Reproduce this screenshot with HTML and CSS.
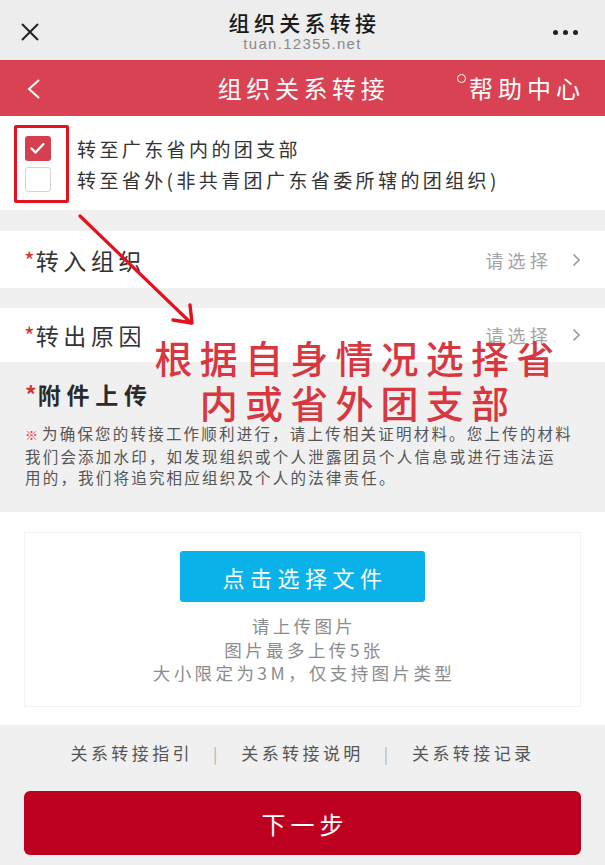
FILE: index.html
```html
<!DOCTYPE html>
<html lang="zh-CN">
<head>
<meta charset="utf-8">
<title>组织关系转接</title>
<link rel="stylesheet" href="styles.css">
</head>
<body>
<div class="topbar">
  <div class="tb-left">
    <svg width="20" height="20" viewBox="0 0 20 20"><path d="M2 2 L18 18 M18 2 L2 18" stroke="#222" stroke-width="2" fill="none"/></svg>
  </div>
  <div class="tb-center">
    <div class="tb-title">组织关系转接</div>
    <div class="tb-url">tuan.12355.net</div>
  </div>
  <div class="tb-right"><span class="dot"></span><span class="dot"></span><span class="dot"></span></div>
</div>

<div class="header">
  <div class="hd-left">
    <svg width="14" height="20" viewBox="0 0 14 20"><polyline points="12,1 2,10 12,19" stroke="#fff" stroke-width="2" fill="none"/></svg>
  </div>
  <div class="hd-title">组织关系转接</div>
  <div class="hd-right"><span class="ring"></span>帮助中心</div>
</div>

<div class="choices">
  <div class="choice">
    <span class="cb cb-on"><svg width="25" height="24" viewBox="0 0 25 24"><polyline points="6.5,12.5 10.5,16.5 18.5,8" stroke="#fff" stroke-width="2.4" fill="none" stroke-linecap="round" stroke-linejoin="round"/></svg></span>
    <span class="choice-text">转至广东省内的团支部</span>
  </div>
  <div class="choice">
    <span class="cb cb-off"></span>
    <span class="choice-text">转至省外(非共青团广东省委所辖的团组织)</span>
  </div>
</div>

<div class="row row-first">
  <div class="row-label"><span class="req">*</span>转入组织</div>
  <div class="row-value">请选择<svg class="chev" width="9" height="14" viewBox="0 0 9 14"><polyline points="1.5,1.5 7,7 1.5,12.5" stroke="#999" stroke-width="1.6" fill="none"/></svg></div>
</div>

<div class="row row-second">
  <div class="row-label"><span class="req">*</span>转出原因</div>
  <div class="row-value">请选择<svg class="chev" width="9" height="14" viewBox="0 0 9 14"><polyline points="1.5,1.5 7,7 1.5,12.5" stroke="#999" stroke-width="1.6" fill="none"/></svg></div>
</div>

<div class="upload-head">
  <div class="upload-title"><span class="req">*</span>附件上传</div>
  <p class="notice"><span class="ref">※</span>为确保您的转接工作顺利进行，请上传相关证明材料。您上传的材料<br>我们会添加水印，如发现组织或个人泄露团员个人信息或进行违法运<br>用的，我们将追究相应组织及个人的法律责任。</p>
</div>

<div class="upload">
  <div class="upload-box">
    <div class="pick-btn">点击选择文件</div>
    <div class="hints">
      <div>请上传图片</div>
      <div>图片最多上传5张</div>
      <div>大小限定为3M，仅支持图片类型</div>
    </div>
  </div>
</div>

<div class="links">
  <span class="link">关系转接指引</span>
  <span class="sep">|</span>
  <span class="link">关系转接说明</span>
  <span class="sep">|</span>
  <span class="link">关系转接记录</span>
</div>

<div class="next-btn">下一步</div>

<!-- annotation overlay -->
<div class="mark-box"></div>
<svg class="mark-arrow" width="140" height="130" viewBox="0 0 140 130">
  <line x1="10" y1="7" x2="121" y2="114" stroke="#e3121c" stroke-width="3.2" stroke-linecap="round"/>
  <polyline points="103,111 122,114 120,96" stroke="#e3121c" stroke-width="3.4" fill="none" stroke-linecap="round" stroke-linejoin="round"/>
</svg>
<div class="mark-text">根据自身情况选择省<br>内或省外团支部</div>
</body>
</html>
```

FILE: styles.css
```css
* { box-sizing: border-box; }

body {
  margin: 0;
  width: 605px;
  min-height: 865px;
  background: #f0f0f0;
  font-family: "Noto Sans CJK SC", "Noto Sans", sans-serif;
  color: #333;
  position: relative;
}

/* WeChat top bar */
.topbar {
  height: 60px;
  background: #ededed;
  display: grid;
  grid-template-columns: 80px 1fr 80px;
  align-items: center;
}
.tb-left { padding-left: 20px; padding-top: 4px; display: flex; }
.tb-center { text-align: center; padding-top: 2px; }
.tb-title {
  font-size: 21px;
  line-height: 26px;
  letter-spacing: 4.3px;
  padding-left: 4px;
  color: #1a1a1a;
  font-weight: 500;
}
.tb-url {
  font-family: "Liberation Sans", Arial, sans-serif;
  font-size: 15px;
  line-height: 18px;
  letter-spacing: 1.3px;
  color: #8a8a8a;
}
.tb-right {
  display: flex;
  justify-content: flex-end;
  gap: 5px;
  padding-right: 27px;
  padding-top: 4px;
}
.dot {
  width: 5px; height: 5px;
  border-radius: 50%;
  background: #222;
}

/* red app header */
.header {
  height: 56px;
  background: #d84252;
  color: #fff;
  display: grid;
  grid-template-columns: 120px 1fr 150px;
  align-items: center;
}
.hd-left { padding-left: 27px; display: flex; padding-top: 2px; }
.hd-title {
  text-align: center;
  font-size: 24px;
  letter-spacing: 4.6px;
  padding-left: 32px;
  line-height: 30px;
}
.hd-right {
  font-size: 24px;
  letter-spacing: 5px;
  line-height: 30px;
  text-align: right;
  padding-right: 20px;
  white-space: nowrap;
}
.ring {
  display: inline-block;
  width: 9px; height: 9px;
  border: 1.5px solid #fff;
  border-radius: 50%;
  vertical-align: top;
  margin-top: 1px;
  margin-right: 3px;
}

/* choices */
.choices {
  background: #fff;
  height: 94px;
  padding: 17px 0 0 25px;
}
.choice {
  height: 31px;
  display: flex;
  align-items: center;
}
.cb {
  width: 26px; height: 25px;
  border-radius: 3px;
  margin-right: 26px;
  flex: none;
  display: flex;
}
.cb-on { background: #d63f50; }
.cb-off { border: 1.5px solid #d4d4d4; background: #fff; }
.choice-text {
  font-size: 19px;
  letter-spacing: 3.4px;
  color: #333;
  white-space: nowrap;
}

/* rows */
.row {
  background: #fff;
  display: flex;
  align-items: center;
  justify-content: space-between;
  padding: 0 24px 0 24px;
}
.row-first { margin-top: 21px; height: 57px; }
.row-second { margin-top: 20px; height: 54px; }
.row-label {
  font-size: 23px;
  letter-spacing: 4.6px;
  color: #333;
}
.req { color: #d9312f; letter-spacing: 0; margin-right: 1px; }
.row-value {
  font-size: 18px;
  letter-spacing: 4.2px;
  color: #a4a4a4;
  display: flex;
  align-items: center;
}
.chev { margin-left: 20px; }

/* upload header */
.upload-head {
  height: 150px;
  padding: 17px 10px 0 25px;
}
.upload-title {
  font-size: 23px;
  font-weight: 700;
  letter-spacing: 5.8px;
  line-height: 30px;
  color: #2a2a2a;
}
.notice {
  margin: 14px 0 0;
  font-size: 15.5px;
  line-height: 21.5px;
  letter-spacing: 2.2px;
  color: #555;
  white-space: nowrap;
}
.ref {
  color: #e0474b;
  font-size: 13px;
  letter-spacing: 0;
  margin-right: 4px;
}

/* upload area */
.upload {
  background: #fff;
  height: 213px;
  padding: 20px 24px 0 24px;
}
.upload-box {
  border: 1px solid #f2f2f2;
  height: 175px;
  padding-top: 18px;
  display: flex;
  flex-direction: column;
  align-items: center;
}
.pick-btn {
  width: 245px;
  height: 51px;
  background: #0ab2e9;
  border-radius: 3px;
  color: #fff;
  font-size: 22px;
  letter-spacing: 5.5px;
  padding-left: 5px;
  display: flex;
  align-items: center;
  justify-content: center;
}
.hints {
  margin-top: 12px;
  text-align: center;
  font-size: 17.5px;
  line-height: 23.5px;
  letter-spacing: 3.4px;
  padding-left: 3px;
  color: #8c8c8c;
}

/* links */
.links {
  display: flex;
  justify-content: center;
  padding-top: 17px;
  height: 66px;
  align-items: flex-start;
  font-size: 17px;
  line-height: 22px;
  color: #555;
}
.link { letter-spacing: 3.4px; }
.sep { color: #b0b0b0; margin: 0 24px 0 20px; font-size: 16px; }

/* next button */
.next-btn {
  margin: 0 24px;
  height: 64px;
  background: #bd0020;
  border-radius: 6px;
  color: #fff;
  font-size: 24px;
  letter-spacing: 5px;
  padding-left: 5px;
  display: flex;
  align-items: center;
  justify-content: center;
}

/* annotation overlays */
.mark-box {
  position: absolute;
  left: 14px;
  top: 125px;
  width: 55px;
  height: 78px;
  border: 3.5px solid #e3121c;
  border-radius: 2px;
}
.mark-arrow {
  position: absolute;
  left: 70px;
  top: 209px;
}
.mark-text {
  position: absolute;
  left: 140px;
  top: 334px;
  width: 430px;
  text-align: center;
  font-size: 38px;
  line-height: 45px;
  letter-spacing: 7.2px;
  padding-left: 6px;
  font-weight: 500;
  color: #d8373f;
}
```
